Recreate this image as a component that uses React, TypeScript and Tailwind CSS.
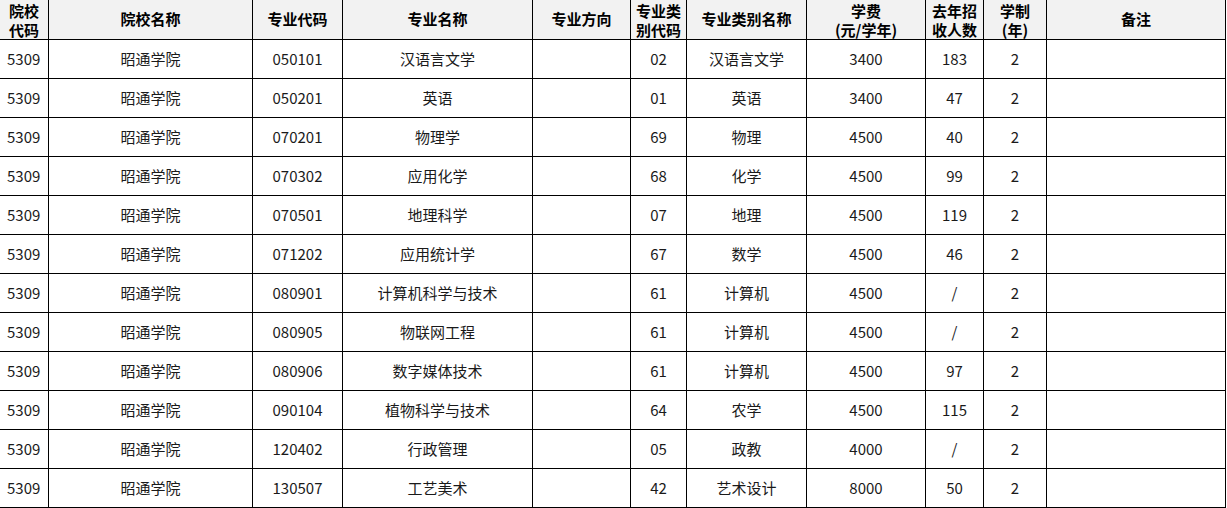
const rows: [string, string, string, string, string, string][] = [
  ["050101", "汉语言文学", "02", "汉语言文学", "3400", "183"],
  ["050201", "英语", "01", "英语", "3400", "47"],
  ["070201", "物理学", "69", "物理", "4500", "40"],
  ["070302", "应用化学", "68", "化学", "4500", "99"],
  ["070501", "地理科学", "07", "地理", "4500", "119"],
  ["071202", "应用统计学", "67", "数学", "4500", "46"],
  ["080901", "计算机科学与技术", "61", "计算机", "4500", "/"],
  ["080905", "物联网工程", "61", "计算机", "4500", "/"],
  ["080906", "数字媒体技术", "61", "计算机", "4500", "97"],
  ["090104", "植物科学与技术", "64", "农学", "4500", "115"],
  ["120402", "行政管理", "05", "政教", "4000", "/"],
  ["130507", "工艺美术", "42", "艺术设计", "8000", "50"],
];

const headers = [
  ["院校", "代码"],
  ["院校名称"],
  ["专业代码"],
  ["专业名称"],
  ["专业方向"],
  ["专业类", "别代码"],
  ["专业类别名称"],
  ["学费", "(元/学年)"],
  ["去年招", "收人数"],
  ["学制", "(年)"],
  ["备注"],
];

const cell = "border-r border-b border-black flex items-center justify-center";

export default function App() {
  return (
    <div
      className="w-[1227px] h-[508px] bg-white text-[15px] text-[#1a1a1a] overflow-hidden"
      style={{ fontFamily: '"Noto Sans CJK SC", "Microsoft YaHei", sans-serif' }}
    >
      <div className="grid grid-cols-[49px_204px_90px_190px_98px_56px_120px_119px_58px_63px_179px]">
        {headers.map((h, i) => (
          <div
            key={i}
            className={`${cell} h-[40px] bg-[#f2f2f2] flex-col font-bold text-black leading-[19px] ${
              h.length === 1 ? "justify-start pt-[9px]" : "pt-0"
            }`}
          >
            {h.map((t) => (
              <span key={t} className="whitespace-nowrap">
                {t}
              </span>
            ))}
          </div>
        ))}
        {rows.map((r) => (
          <div key={r[0]} className="contents">
            <div className="border-r border-b border-black flex items-center h-[39px] pl-[7px]">5309</div>
            <div className={cell}>昭通学院</div>
            <div className={cell}>{r[0]}</div>
            <div className={cell}>{r[1]}</div>
            <div className={cell}></div>
            <div className={cell}>{r[2]}</div>
            <div className={cell}>{r[3]}</div>
            <div className={cell}>{r[4]}</div>
            <div className={cell}>{r[5]}</div>
            <div className={cell}>2</div>
            <div className={cell}></div>
          </div>
        ))}
      </div>
    </div>
  );
}
